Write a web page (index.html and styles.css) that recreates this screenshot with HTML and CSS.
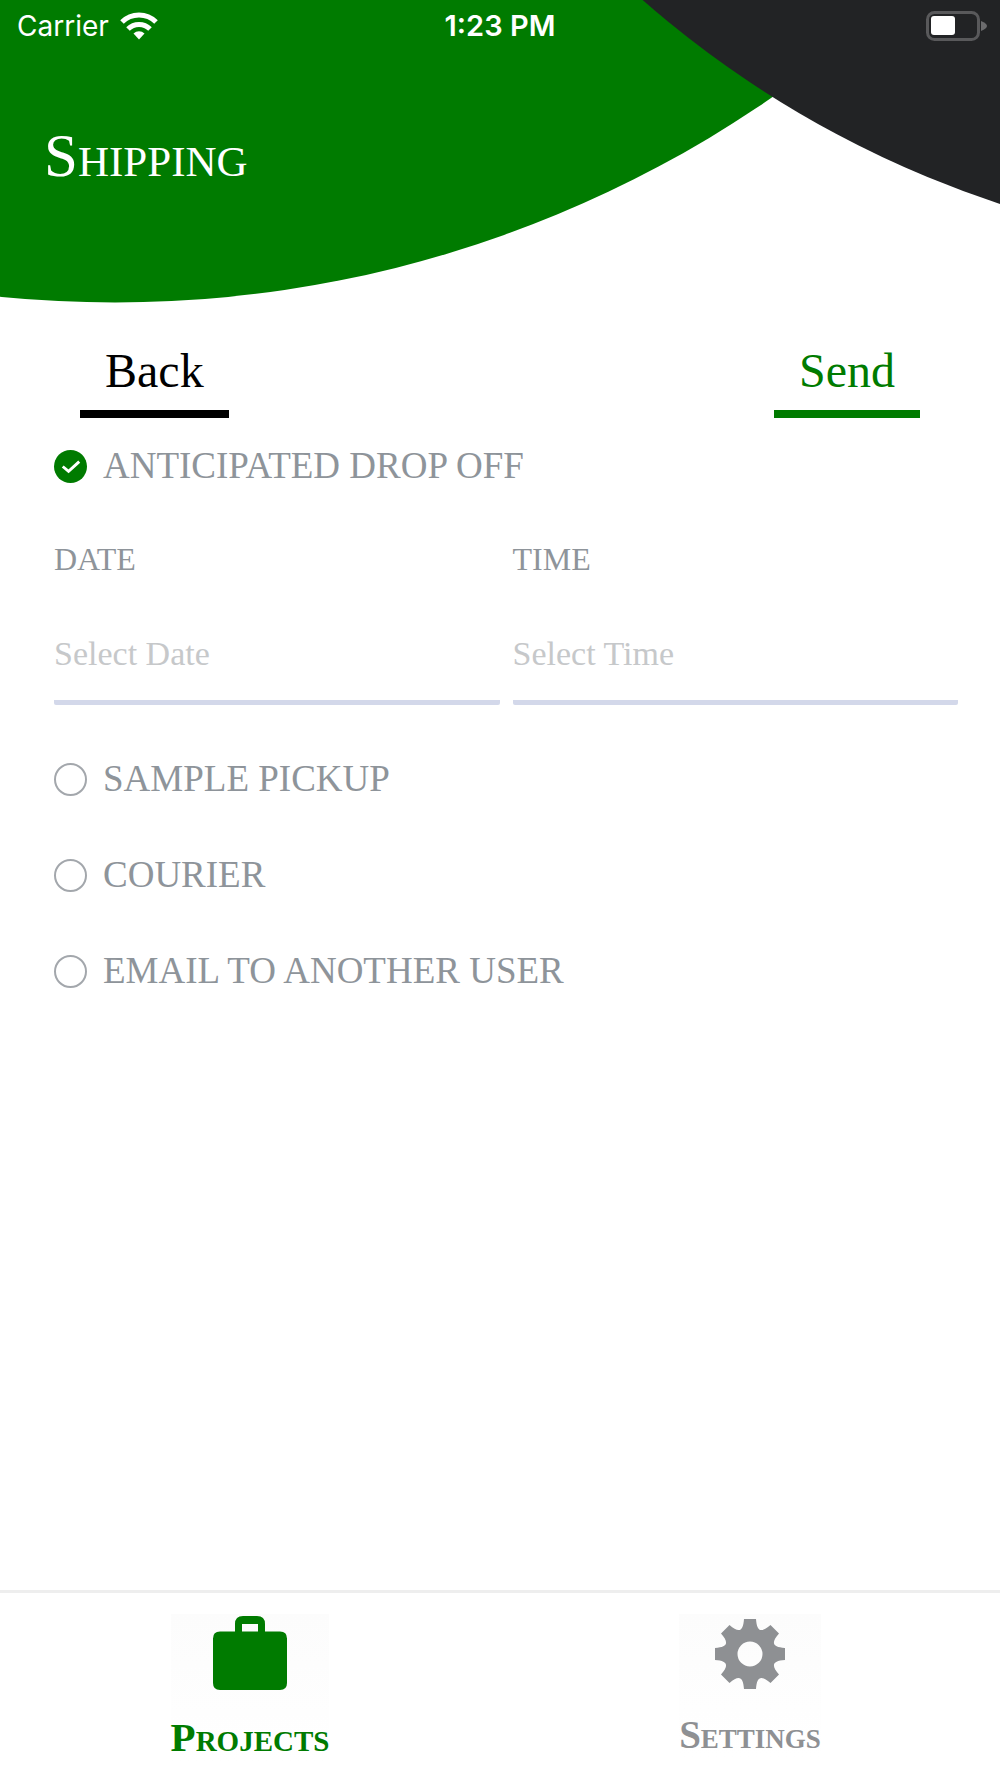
FILE: index.html
```html
<!DOCTYPE html>
<html lang="en">
<head>
  <meta charset="utf-8">
  <meta name="viewport" content="width=device-width, initial-scale=1">
  <title>Shipping</title>
  <link rel="stylesheet" href="styles.css">
</head>
<body>
  <header class="header">
    <svg class="header-art" viewBox="0 0 1000 303" preserveAspectRatio="none" aria-hidden="true">
      <circle class="art-green" cx="115" cy="-852.5" r="1155"/>
      <circle class="art-dark" cx="1322" cy="-775.5" r="1031"/>
    </svg>
    <div class="status">
      <div class="status-carrier">
        <span>Carrier</span>
        <svg width="38" height="28" viewBox="0 0 38 28" aria-hidden="true">
          <g fill="none" stroke="#fff" stroke-width="5">
            <path d="M2 10A24 24 0 0 1 36 10"/>
            <path d="M8 17A15.500 15.500 0 0 1 30 17"/>
          </g>
          <path fill="#fff" d="M13.500 21.500a8 8 0 0 1 11 0L19 27.500z"/>
        </svg>
      </div>
      <time class="status-time">1:23 PM</time>
      <svg class="battery" width="62" height="30" viewBox="0 0 62 30" aria-hidden="true">
        <rect x="1.500" y="1.500" width="51" height="27" rx="7" fill="none" stroke="#59595b" stroke-width="3"/>
        <rect x="5" y="5" width="24" height="19" rx="3" fill="#fff"/>
        <path fill="#6b6b6d" d="M55 10q6 2.500 6 5t-6 5z"/>
      </svg>
    </div>
    <h1 class="title">Shipping</h1>
  </header>

  <main class="main">
    <div class="actions">
      <button class="action" type="button">Back</button>
      <button class="action action-send" type="submit" form="shipping">Send</button>
    </div>
    <form class="form" id="shipping">
      <label class="option"><input class="radio" type="radio" name="method" checked>ANTICIPATED DROP OFF</label>
      <div class="fields">
        <div class="field">
          <label class="field-label" for="date">DATE</label>
          <input class="field-input" id="date" type="text" placeholder="Select Date">
        </div>
        <div class="field">
          <label class="field-label" for="time">TIME</label>
          <input class="field-input" id="time" type="text" placeholder="Select Time">
        </div>
      </div>
      <div class="options">
        <label class="option"><input class="radio" type="radio" name="method">SAMPLE PICKUP</label>
        <label class="option"><input class="radio" type="radio" name="method">COURIER</label>
        <label class="option"><input class="radio" type="radio" name="method">EMAIL TO ANOTHER USER</label>
      </div>
    </form>
  </main>

  <nav class="tabs">
    <a class="tab tab-active" href="#projects">
      <span class="tab-body">
        <svg width="76" height="76" viewBox="0 0 76 76" aria-hidden="true">
          <path fill="currentColor" fill-rule="evenodd" d="M8 17.500H23V10Q23 2 31 2H45Q53 2 53 10V17.500H68Q75 17.500 75 24.500V69Q75 76 68 76H8Q1 76 1 69V24.500Q1 17.500 8 17.500ZM30 10V17.500H46V10Z"/>
        </svg>
        <span class="tab-label">Projects</span>
      </span>
    </a>
    <a class="tab" href="#settings">
      <span class="tab-body">
        <svg width="76" height="76" viewBox="-38 -40 76 76" aria-hidden="true">
          <path fill="currentColor" fill-rule="evenodd" d="M-6-35L6-35C6.800-22.500 11.100-20.700 20.500-29L29-20.500C20.700-11.100 22.500-6.800 35-6L35 6C22.500 6.800 20.700 11.100 29 20.500L20.500 29C11.100 20.700 6.800 22.500 6 35L-6 35C-6.800 22.500-11.100 20.700-20.500 29L-29 20.500C-20.700 11.100-22.500 6.800-35 6L-35-6C-22.500-6.800-20.700-11.100-29-20.500L-20.500-29C-11.100-20.700-6.800-22.500-6-35ZM-12.500 0a12.500 12.500 0 1 0 25 0a12.500 12.500 0 1 0-25 0Z"/>
        </svg>
        <span class="tab-label">Settings</span>
      </span>
    </a>
  </nav>
</body>
</html>
```
FILE: styles.css
```css
* {
  box-sizing: border-box;
}

body {
  display: flex;
  flex-direction: column;
  min-height: 100vh;
  margin: 0;
  background: #fff;
  color: #8e949a;
  font-family: "Liberation Serif", "Times New Roman", serif;
}

/* Header */
.header {
  position: relative;
  padding-bottom: 115px;
  color: #fff;
}

.header-art {
  position: absolute;
  inset: 0;
  z-index: -1;
  width: 100%;
  height: 100%;
}

.art-green {
  fill: #007b00;
}

.art-dark {
  fill: #222325;
}

.status {
  display: grid;
  grid-template-columns: 1fr auto 1fr;
  align-items: center;
  height: 52px;
  padding: 0 12px;
  font: 400 28px/52px Inter, sans-serif;
}

.status-carrier {
  display: flex;
  align-items: center;
  gap: 11px;
  padding-left: 5px;
}

.status-time {
  font-size: 29px;
  font-weight: 600;
}

.battery {
  justify-self: end;
}

.title {
  margin: 72px 44px 0;
  font-size: 61px;
  font-weight: 400;
  font-variant: small-caps;
  line-height: 64px;
}

/* Content */
.main {
  flex: 1;
}

.actions {
  display: flex;
  justify-content: space-between;
  padding: 40px 80px 24px;
}

.action {
  padding: 0 25px 11px;
  border: 0;
  border-bottom: 8px solid;
  background: none;
  color: #000;
  font: inherit;
  font-size: 48px;
  line-height: 56px;
}

.action-send {
  color: #007b00;
}

.form {
  padding: 0 42px 48px 54px;
}

.option {
  display: flex;
  align-items: center;
  gap: 16px;
  font-size: 37px;
  line-height: 48px;
}

.radio {
  flex: none;
  width: 33px;
  height: 33px;
  margin: 0;
  border: 2px solid #a3a7ac;
  border-radius: 50%;
  appearance: none;
}

.radio:checked {
  border: 0;
  background: #007b00 url("data:image/svg+xml,%3Csvg xmlns='http://www.w3.org/2000/svg' viewBox='0 0 34 34'%3E%3Cpath d='M9 17l6 5L26 12' fill='none' stroke='%23fff' stroke-width='3'/%3E%3C/svg%3E");
}

.fields {
  display: flex;
  gap: 13px;
  padding: 49px 0 50px;
}

.field {
  display: flex;
  flex: 1;
  flex-direction: column;
  gap: 54px;
  min-width: 0;
}

.field-label {
  font-size: 32px;
  line-height: 40px;
}

.field-input {
  width: 100%;
  height: 72px;
  padding: 0 0 25px;
  border: 0;
  border-bottom: 5px solid #d3d8ea;
  border-radius: 2px;
  background: none;
  color: inherit;
  font: inherit;
  font-size: 34px;
}

.field-input::placeholder {
  color: #c6c8ca;
}

.options {
  display: grid;
  gap: 48px;
}

/* Tab bar */
.tabs {
  display: flex;
  border-top: 3px solid #eee;
}

.tab {
  display: flex;
  flex: 1;
  justify-content: center;
  align-items: flex-start;
  padding: 21px 0 16px;
  color: #8e9093;
  text-decoration: none;
}

.tab-body {
  display: flex;
  flex-direction: column;
  align-items: center;
  gap: 22px;
  background: linear-gradient(#fcfcfc, #fff);
}

.tab-active {
  color: #007b00;
}

.tab-label {
  font-size: 39px;
  font-weight: 700;
  font-variant: small-caps;
  line-height: 46px;
}

.tab-active .tab-label {
  font-size: 41px;
  line-height: 50px;
}
```
